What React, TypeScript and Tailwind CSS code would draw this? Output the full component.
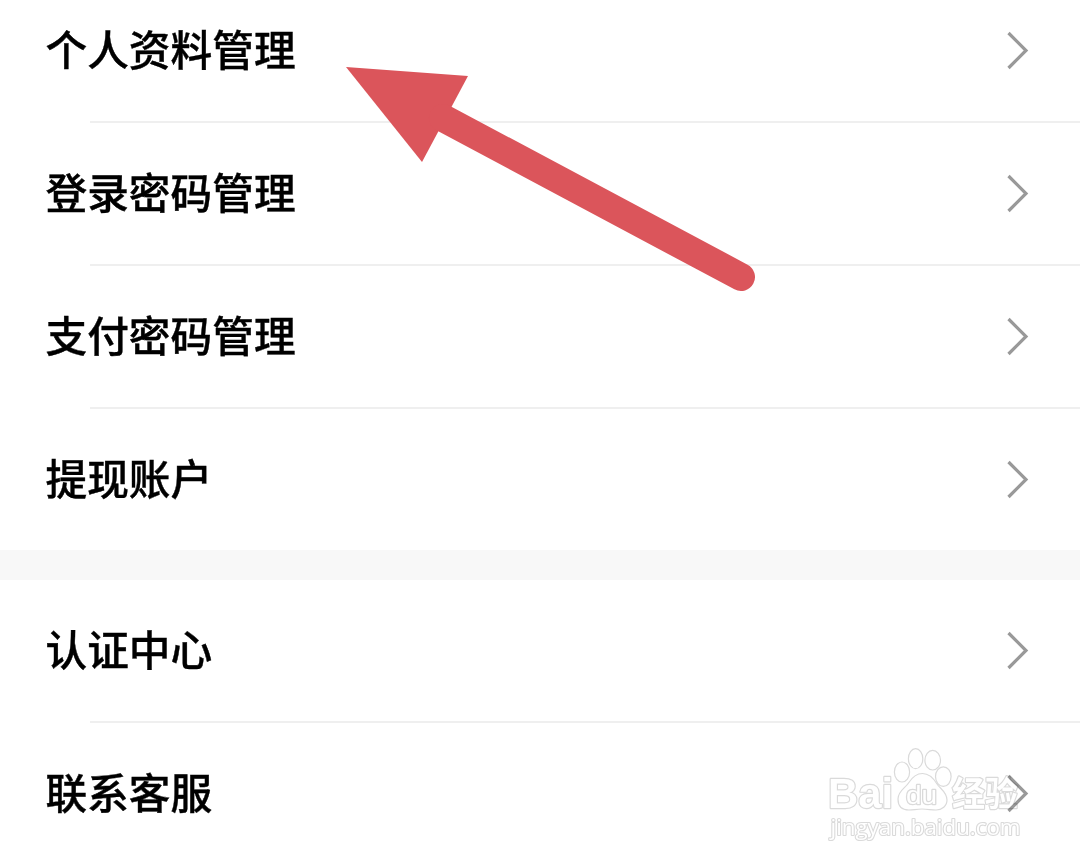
const groups = [
  ['个人资料管理', '登录密码管理', '支付密码管理', '提现账户'],
  ['认证中心', '联系客服'],
];

function Chevron() {
  return (
    <svg width="24" height="40" viewBox="0 0 24 40" fill="none" stroke="#999999" strokeWidth="3.2">
      <path d="M3.5 3 21 20.5 3.5 38" />
    </svg>
  );
}

function Row({ label, last }: { label: string; last: boolean }) {
  return (
    <li>
      <button className="flex h-[141px] w-full items-center justify-between pr-[51px] pb-px pl-[45.5px] text-left">
        <span className="pb-[3px] text-[41.7px] leading-none font-medium text-black [-webkit-text-stroke:0.4px_black]">
          {label}
        </span>
        <Chevron />
      </button>
      {!last && <div className="ml-[90px] h-0.5 bg-[#efefef]" />}
    </li>
  );
}

function Watermark() {
  return (
    <svg
      className="absolute right-[52px] bottom-[20px] mix-blend-multiply"
      width="208"
      height="100"
      viewBox="820 744 208 100"
      fill="white"
      stroke="#dadada"
      strokeWidth="1.2"
      strokeLinejoin="round"
    >
      {/* Paw */}
      <ellipse cx="902" cy="772" rx="7.6" ry="10" />
      <ellipse cx="915.6" cy="758.7" rx="7.2" ry="10" />
      <ellipse cx="932.7" cy="760.2" rx="7.8" ry="9.8" />
      <ellipse cx="943.3" cy="776.6" rx="7.8" ry="9.8" />
      <path d="M922.5 773.5C930 773.5 934 779 937 784C940 788.5 947 792 947 800C947 806 942 810 936 810C931 810 928 809 922 809C916 809 914 810 909 810C902 810 898 806 898 799C898 791 905 788.5 908.5 783C912 777.5 916 773.5 922.5 773.5Z" />

      <g className="font-['Liberation_Sans',sans-serif] [paint-order:stroke]" strokeWidth="2.4">
        <text className="font-bold" x="828" y="808" fontSize="43" textLength="65" lengthAdjust="spacingAndGlyphs">
          Bai
        </text>
        <text x="906" y="803.5" fontSize="25.5" textLength="31" lengthAdjust="spacingAndGlyphs">
          du
        </text>
      </g>
      <text
        className="font-['Noto_Sans_CJK_SC',sans-serif] font-bold [paint-order:stroke]"
        x="952"
        y="805.5"
        fontSize="34"
        strokeWidth="2.4"
        textLength="66"
        lengthAdjust="spacingAndGlyphs"
      >
        经验
      </text>
      <text
        className="font-['Open_Sans',sans-serif] [paint-order:stroke]"
        x="830.5"
        y="834.5"
        fontSize="22"
        strokeWidth="2.2"
        textLength="190"
        lengthAdjust="spacingAndGlyphs"
      >
        jingyan.baidu.com
      </text>
    </svg>
  );
}

export default function App() {
  return (
    <main className="relative h-[864px] w-full overflow-hidden bg-white font-['Noto_Sans_CJK_SC',sans-serif]">
      <div className="-mt-5">
        {groups.map((items, i) => (
          <section key={items[0]}>
            {i > 0 && <div className="h-[30px] bg-[#f8f8f8]" />}
            <ul>
              {items.map((label, j) => (
                <Row key={label} label={label} last={j === items.length - 1} />
              ))}
            </ul>
          </section>
        ))}
      </div>

      {/* Pointer to the first entry */}
      <svg className="absolute top-0 left-0" width="1080" height="320" viewBox="0 0 1080 320">
        <path d="M346 67 468 76 422 162Z" fill="#db555b" />
        <path d="M443 118 741 277" stroke="#db555b" strokeWidth="28" strokeLinecap="round" />
      </svg>
      <Watermark />
    </main>
  );
}
